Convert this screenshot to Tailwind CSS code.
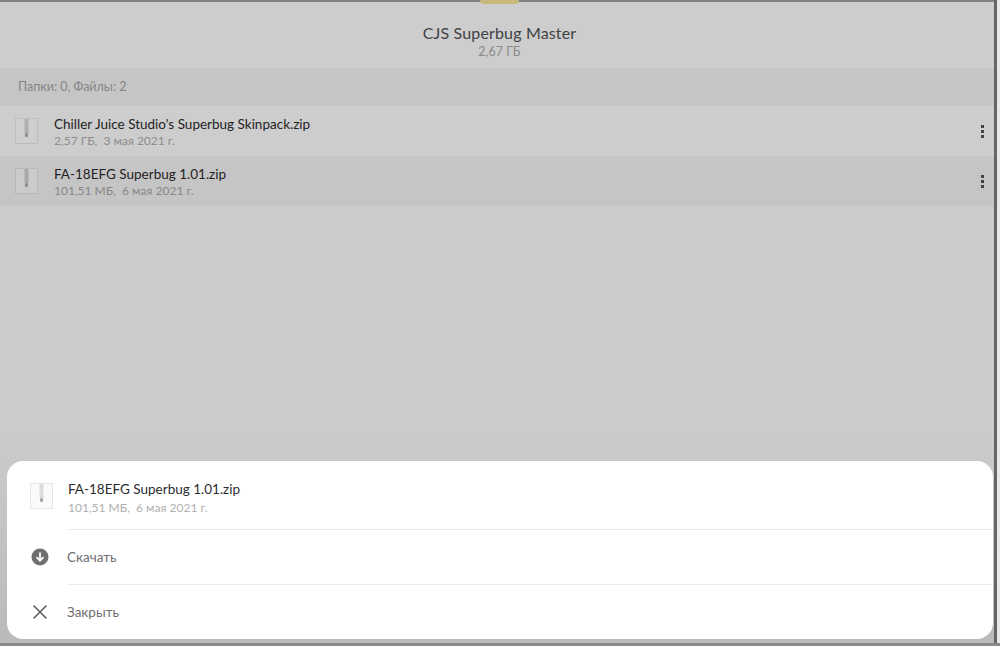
<!DOCTYPE html>
<html lang="en">
<head>
    <meta charset="UTF-8">
    <meta name="viewport" content="width=device-width, initial-scale=1.0">
    <title>Superbug</title>
    <script src="https://cdn.jsdelivr.net/npm/@tailwindcss/browser@4"></script>
</head>
<body class="m-0 overflow-hidden bg-[#d4d4d4] font-['Lato','Noto_Sans',sans-serif]">
    <div class="relative h-[646px] w-[1000px] overflow-hidden">
        <div class="h-[2px] w-full bg-[#808080]"></div>
        <div class="absolute left-[480px] top-0 z-10 h-[4px] w-[39px] rounded-b-sm bg-[#c9b97c]"></div>

        <div class="flex h-[644px] w-[994px] flex-col bg-gradient-to-b from-[#cccccc] from-65% to-[#bababa]">
            <!-- Folder header -->
            <header class="flex h-[66px] shrink-0 flex-col items-center bg-[#cdcdcd] pl-[5px] pt-[21px]">
                <h1 class="text-[16px] leading-[20px] tracking-[0.15px] text-[#3f4245]">CJS Superbug Master</h1>
                <p class="text-[12.5px] leading-[18px] text-[#8a8a8a]">2,67 ГБ</p>
            </header>

            <div class="flex h-[38px] shrink-0 items-center bg-[#c5c5c5] pl-[18px] text-[12.5px] text-[#858585]">Папки: 0, Файлы: 2</div>

            <!-- File list -->
            <div class="flex h-[50px] shrink-0 items-center bg-[#cdcdcd] pl-[15px] pr-[10px]">
                <svg class="mt-[2px] h-[28px] w-[24px] shrink-0" viewBox="0 0 24 28" fill="none"><rect x="0.5" y="0.5" width="22" height="25" fill="#cfcfcf" stroke="#bdbdbd"/><rect x="9.5" y="1" width="4" height="14" fill="#b0b0b0"/><rect x="10" y="15" width="3" height="4" rx="1" fill="#8f8f8f"/></svg>
                <div class="ml-[15px] flex-1">
                    <p class="text-[13.5px] leading-[18px] text-[#1f2224]">Chiller Juice Studio's Superbug Skinpack.zip</p>
                    <p class="text-[12px] leading-[15px] text-[#8c8c8c]">2,57 ГБ,&nbsp; 3 мая 2021 г.</p>
                </div>
                <div class="flex flex-col gap-[2px]"><span class="h-[3px] w-[3px] bg-[#444]"></span><span class="h-[3px] w-[3px] bg-[#444]"></span><span class="h-[3px] w-[3px] bg-[#444]"></span></div>
            </div>
            <div class="flex h-[50px] shrink-0 items-center bg-[#c5c5c6] pl-[15px] pr-[10px]">
                <svg class="mt-[2px] h-[28px] w-[24px] shrink-0" viewBox="0 0 24 28" fill="none"><rect x="0.5" y="0.5" width="22" height="25" fill="#cbcbcb" stroke="#b7b7b7"/><rect x="9.5" y="1" width="4" height="14" fill="#a8a8a8"/><rect x="10" y="15" width="3" height="4" rx="1" fill="#8c8c8c"/></svg>
                <div class="ml-[15px] flex-1">
                    <p class="text-[13.5px] leading-[18px] text-[#1f2224]">FA-18EFG Superbug 1.01.zip</p>
                    <p class="text-[12px] leading-[15px] text-[#878787]">101,51 МБ,&nbsp; 6 мая 2021 г.</p>
                </div>
                <div class="flex flex-col gap-[2px]"><span class="h-[3px] w-[3px] bg-[#444]"></span><span class="h-[3px] w-[3px] bg-[#444]"></span><span class="h-[3px] w-[3px] bg-[#444]"></span></div>
            </div>
        </div>

        <!-- Right edge strip and bottom line -->
        <div class="absolute right-0 top-0 h-full w-[6px] bg-[#e8e8e8]"><div class="h-full w-[3px] bg-[#666]"></div></div>
        <div class="absolute bottom-0 left-0 h-[3px] w-full bg-[#8a8a8a]"></div>

        <!-- Bottom sheet -->
        <div class="absolute left-[7px] top-[461px] w-[986px] rounded-[16px] bg-white">
            <div class="flex h-[68px] items-center pl-[23px]">
                <svg class="mt-[4px] h-[28px] w-[24px] shrink-0" viewBox="0 0 24 28" fill="none"><rect x="0.5" y="0.5" width="22" height="25" fill="#fafafa" stroke="#e5e5e5"/><rect x="9.5" y="1" width="4" height="14" fill="#dddddd"/><rect x="10" y="15" width="3" height="4" rx="1" fill="#a8a8a8"/></svg>
                <div class="ml-[14px] pt-[5px]">
                    <p class="text-[13.5px] leading-[18px] text-[#2a2d2f]">FA-18EFG Superbug 1.01.zip</p>
                    <p class="mt-[2px] text-[12px] leading-[15px] text-[#b0b0b0]">101,51 МБ,&nbsp; 6 мая 2021 г.</p>
                </div>
            </div>
            <div class="ml-[60px] border-t border-[#ececec]">
                <div class="-ml-[60px] flex h-[54px] items-center pl-[24px]">
                    <svg class="h-[18px] w-[18px] shrink-0" viewBox="0 0 18 18"><circle cx="9" cy="9" r="8.5" fill="#6f6f6f"/><path d="M9 4.5v8M5.5 9.2 9 12.7l3.5-3.5" fill="none" stroke="#fff" stroke-width="1.8"/></svg>
                    <span class="ml-[18px] text-[13.5px] text-[#6f6f6f]">Скачать</span>
                </div>
            </div>
            <div class="ml-[60px] border-t border-[#ececec]">
                <div class="-ml-[60px] flex h-[54px] items-center pl-[24px]">
                    <svg class="h-[18px] w-[18px] shrink-0" viewBox="0 0 18 18"><path d="M2.5 2.5l13 13M15.5 2.5l-13 13" fill="none" stroke="#5a5a5a" stroke-width="1.5"/></svg>
                    <span class="ml-[18px] text-[13.5px] text-[#6f6f6f]">Закрыть</span>
                </div>
            </div>
        </div>
    </div>
</body>
</html>
